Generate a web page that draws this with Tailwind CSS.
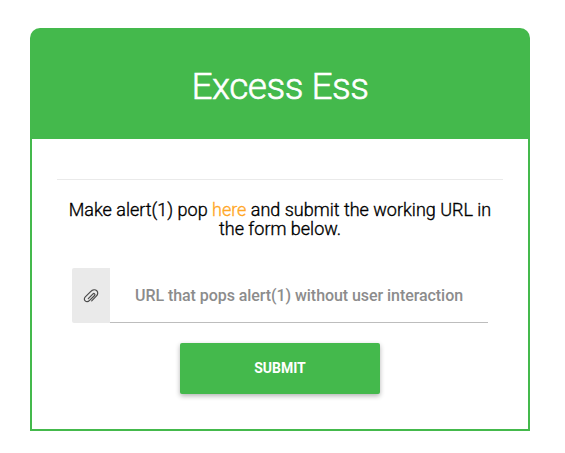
<!DOCTYPE html>
<html lang="en">
<head>
    <meta charset="UTF-8">
    <title>Excess Ess</title>
    <script src="https://cdn.jsdelivr.net/npm/@tailwindcss/browser@4"></script>
</head>
<body class="bg-white font-['Roboto',sans-serif] text-black">
    <div class="mt-7 ml-[30px] w-[500px] h-[403px]">
        <div class="h-[111px] rounded-t-[10px] bg-[#44b94c] flex items-center justify-center">
            <h1 class="text-[37px] leading-none font-light tracking-[-0.5px] text-white pt-1.5 [-webkit-text-stroke:0.6px_white]">Excess Ess</h1>
        </div>

        <div class="h-[292px] border-x-2 border-b-2 border-[#44b94c] px-[25px] pt-10">
            <hr class="border-t border-[#eaeaea]">
            <p class="mt-5 text-center text-[18px] leading-[19px] font-light [-webkit-text-stroke:0.35px_currentColor]">
                Make alert(1) pop <a href="#" class="text-[#ffa726]">here</a> and submit the working URL in<br>the form below.
            </p>

            <form class="mt-[30px] px-[15px]">
                <div class="flex h-[55px]">
                    <span class="w-[38px] rounded-l-xs bg-[#eaeaea] flex items-center justify-center">
                        <svg class="w-4 h-4" viewBox="0 0 16 16" fill="none" stroke="#4a4a4a" stroke-width="1.2" stroke-linecap="round"><path d="M5.3 10.6 10 5.9a1.1 1.1 0 0 1 1.6 1.6L6.6 12.4C5.2 13.8 3.4 14 2.2 12.9S1.1 10.1 2.3 8.9L7.6 3.6C9.6 1.6 12.3 1.4 13.8 2.8S14.9 6.6 13.3 8.2L8.7 12.9"/></svg>
                    </span>
                    <input type="text" placeholder="URL that pops alert(1) without user interaction" class="flex-1 border-b border-[#bdbdbd] pt-0.5 text-center text-base font-medium tracking-[-0.06px] placeholder-[#8c8c8c] outline-none">
                </div>
                <button type="button" class="block mx-auto mt-5 w-[200px] h-[51px] pb-0.5 rounded-xs bg-[#44b94c] text-white text-sm font-bold shadow-[0_2px_5px_rgba(0,0,0,0.3)]">SUBMIT</button>
            </form>
        </div>
    </div>
</body>
</html>
